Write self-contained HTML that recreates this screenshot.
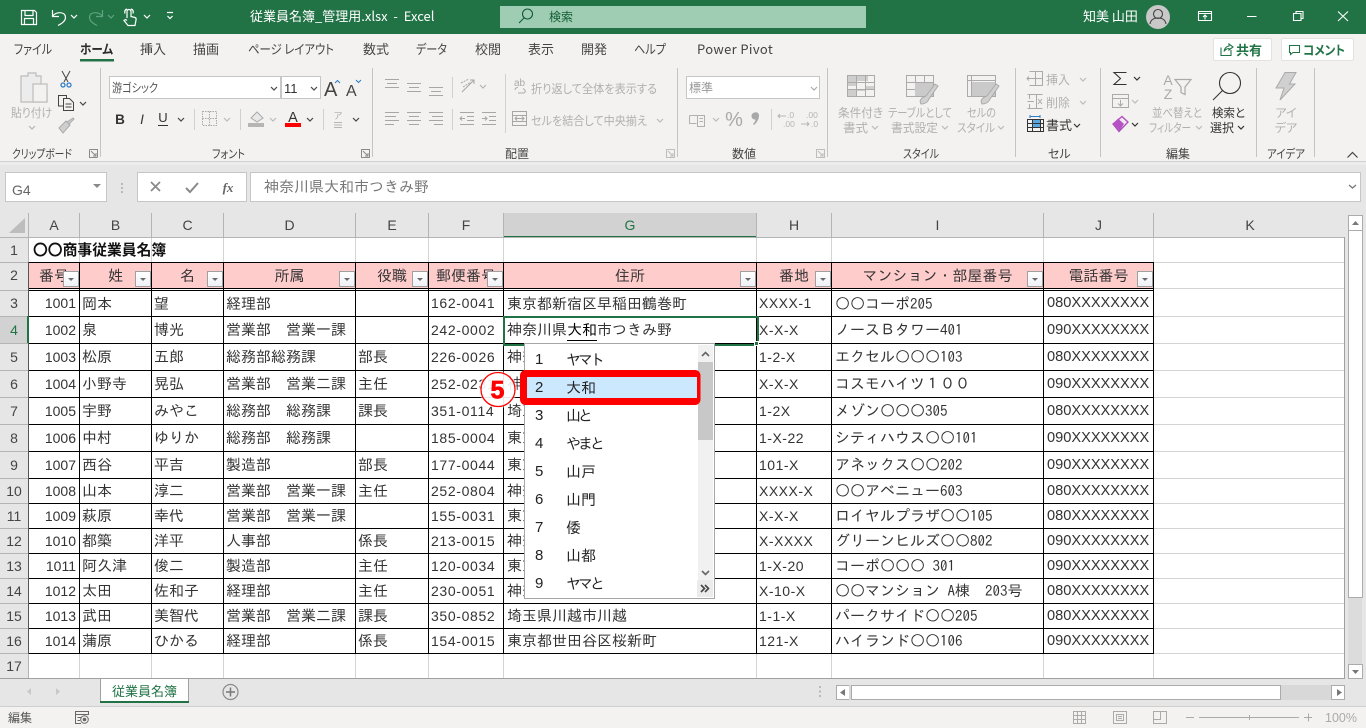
<!DOCTYPE html>
<html lang="ja"><head><meta charset="utf-8"><title>従業員名簿_管理用.xlsx - Excel</title>
<style>
html,body{margin:0;padding:0;width:1366px;height:728px;overflow:hidden;background:#e6e6e6}
body{position:relative;font-family:"IPAGothic","Noto Sans CJK JP",sans-serif;color:#222}
svg{position:absolute;left:0;top:0;display:block}
.u{font-family:"Noto Sans CJK JP","Liberation Sans",sans-serif;font-size:12px;font-feature-settings:"palt";fill:#444}
.t{font-size:13px}
.g{fill:#b0b0b0}.m{text-anchor:middle}.k{fill:#333}
.l{font-family:"Liberation Sans",sans-serif}
.r{position:absolute;left:0;width:1344px;font-size:15px;color:#333}
.r i{position:absolute;top:0;font-style:normal;white-space:nowrap}
.r i:nth-of-type(1){left:29px;width:47px;text-align:right;font-family:"Liberation Sans",sans-serif;font-size:14px}
.r i:nth-of-type(2){left:82px}
.r i:nth-of-type(3){left:154px}
.r i:nth-of-type(4){left:226px}
.r i:nth-of-type(5){left:358px}
.r i:nth-of-type(6){left:431px;font-family:"Liberation Sans",sans-serif;font-size:14px;letter-spacing:.65px}
.r i:nth-of-type(7){left:507px;width:248px;overflow:hidden}
.r i:nth-of-type(8){left:759px;font-family:"Liberation Sans",sans-serif;font-size:14px;letter-spacing:.5px}
.r i:nth-of-type(9){left:835px}
.r i:nth-of-type(10){left:1047px;font-family:"Liberation Sans",sans-serif;font-size:14.6px}
.rn{position:absolute;left:0;width:28px;text-align:center;font-family:"Liberation Sans",sans-serif;font-size:14px;color:#444}
.hd{position:absolute;left:0;top:263px;height:25px;line-height:25px;width:1344px;font-size:15px;color:#333}
.hd b{position:absolute;top:0;font-weight:400;text-align:center;white-space:nowrap}
.fb{position:absolute;top:271px;width:14px;height:14px;border:1px solid #a0a0a0;background:linear-gradient(#fff,#eef1f5)}
.fb:after{content:"";position:absolute;left:4px;top:6px;border:3.500px solid transparent;border-top:3.500px solid #6a6a6a;border-bottom:0}
.ch{position:absolute;top:213px;height:24px;text-align:center;font-family:"Liberation Sans",sans-serif;font-size:14px;line-height:24px;color:#444}
#pop{position:absolute;left:524px;top:343px;width:189px;height:254px;border:1px solid #a6a6a6;background:#fff;font-size:15px;color:#222}
#pop div{position:absolute;left:0;width:170px;height:28px;line-height:28px}
#pop s{position:absolute;left:10px;text-decoration:none;font-family:"Liberation Sans",sans-serif;font-size:15px;line-height:28px}
#pop em{position:absolute;left:41px;font-style:normal;white-space:nowrap}
#pop em.n{letter-spacing:-3px}
</style></head><body>
<svg width="1366" height="728" viewBox="0 0 1366 728">
<defs><path id="c" d="M0 0l3 3 3-3" fill="none" stroke="currentColor" stroke-width="1.2"/></defs>
<!-- title bar -->
<rect width="1366" height="34" fill="#217346"/>
<rect y="34" width="1366" height="127" fill="#f3f2f1"/>
<rect y="161" width="1366" height="1" fill="#d2d2d2"/><rect y="162" width="1366" height="3" fill="#ececec"/>
<g fill="none" stroke="#fff" stroke-width="1.2">
<path d="M21.5 10.5H34.5L36.5 12.5V24.5H21.5ZM25 10.5V15.5H33V10.5M24.5 24.5V18.5H33.5V24.5"/>
<path d="M52.5 10V16.5H59M52.5 16.5C55 11.5 65.5 11 65.5 17.5C65.5 21 61 24 58 25.5"/>
<path stroke="#5ea37f" d="M102.5 10V16.5H96M102.5 16.5C100 11.5 89.5 11 89.5 17.5C89.5 21 94 24 97 25.5"/>
<path d="M127 18V11.5Q127 9.5 129 9.5T131 11.5V16.5L135 17.5Q136.500 18 136 20L135 25.500H128L124 20.500L125.500 19.500L127 20.500M125 13.500Q124 10 127 9M131 9Q134 10 133 13.500"/>
<path d="M167 12.500H173M167.500 16l2.500 2.500 2.500-2.500"/>
</g>
<use href="#c" x="71" y="15" color="#fff"/><use href="#c" x="108" y="15" color="#5ea37f"/><use href="#c" x="144" y="15" color="#fff"/>
<text x="250" y="21" class="u" style="font-size:13px;fill:#fff;font-feature-settings:normal">従業員名簿_管理用.xlsx&#160;&#160;-&#160;&#160;Excel</text>
<rect x="500" y="6" width="366" height="22" fill="#9fcdb3"/>
<circle cx="527.500" cy="14" r="5" fill="none" stroke="#0f5a33" stroke-width="1.100"/><path d="M524 18l-5 5" stroke="#0f5a33" stroke-width="1.100"/>
<text x="549" y="21" class="u" style="fill:#125c35;font-size:12px">検索</text>
<text x="1083" y="21" class="u" style="font-size:13px;fill:#fff;font-feature-settings:normal">知美 山田</text>
<circle cx="1158" cy="17" r="12" fill="#c8c8c8"/><circle cx="1158" cy="14" r="4.500" fill="none" stroke="#444" stroke-width="1.100"/><path d="M1150 24q1-6 8-6t8 6" fill="none" stroke="#444" stroke-width="1.100"/>
<g fill="none" stroke="#fff" stroke-width="1.100"><path d="M1198.500 11.500H1211.500V20.500H1198.500ZM1198.500 13.500H1211.500M1205 19.500V15M1203 17l2-2 2 2"/>
<path d="M1247 16.500H1256.500M1293.500 13.500H1301V20.500H1293.500ZM1296 13.500V11.500H1303V18.500H1301M1338 11.500L1348 21M1348 11.500L1338 21"/></g>
<!-- tabs -->
<text x="14" y="54" class="u t" textLength="38" lengthAdjust="spacingAndGlyphs">ファイル</text>
<text x="80" y="54" class="u t" style="font-weight:700;fill:#2b2b2b" textLength="33" lengthAdjust="spacingAndGlyphs">ホーム</text>
<text x="140" y="54" class="u t">挿入</text>
<text x="193" y="54" class="u t">描画</text>
<text x="248" y="54" class="u t" textLength="86" lengthAdjust="spacingAndGlyphs">ページ レイアウト</text>
<text x="363" y="54" class="u t">数式</text>
<text x="416" y="54" class="u t" textLength="31" lengthAdjust="spacingAndGlyphs">データ</text>
<text x="475" y="54" class="u t">校閲</text>
<text x="528" y="54" class="u t">表示</text>
<text x="581" y="54" class="u t">開発</text>
<text x="634" y="54" class="u t" textLength="32" lengthAdjust="spacingAndGlyphs">ヘルプ</text>
<text x="697" y="54" class="u t" style="letter-spacing:.35px">Power Pivot</text>
<rect x="80" y="59" width="34" height="2.500" fill="#217346"/>
<!-- share / comment -->
<rect x="1213.500" y="38.500" width="58" height="22" rx="1.500" fill="#fff" stroke="#e4e2e0"/><rect x="1281.500" y="38.500" width="72" height="22" rx="1.500" fill="#fff" stroke="#e4e2e0"/>
<path d="M1221 47.500V55.500H1231V50M1224 51.500Q1225 46.500 1229 46V44L1233 47L1229 50V48.500Q1226 48.500 1224 51.500" fill="none" stroke="#217346" stroke-width="1.100"/>
<text x="1236" y="55" class="u t" style="font-weight:700;fill:#217346">共有</text>
<path d="M1289.500 45.500H1299.500V52.500H1293L1290.500 54.500V52.500H1289.500Z" fill="none" stroke="#217346" stroke-width="1.100"/>
<text x="1303" y="55" class="u t" style="font-weight:700;fill:#217346" textLength="42" lengthAdjust="spacingAndGlyphs">コメント</text>
<!-- ribbon separators -->
<path d="M100.500 68V157M372.500 68V157M677.500 68V157M827.500 68V157M1015.500 68V157M1100.500 68V157M1256.500 68V157M1314.500 68V157" stroke="#c4c4c4"/>
<path d="M194.500 109V130M240.500 109V130M323.500 109V130M452.500 77V98M452.500 109V130M505.500 74V133M771.500 109V130" stroke="#d0d0d0"/>
<!-- clipboard -->
<path d="M21 76H28V73H36V76H41V91H47V102H21Z" fill="#ececec" stroke="#bcbcbc" stroke-width="1.200"/><rect x="33" y="84" width="14" height="18" fill="#f3f2f1" stroke="#bcbcbc" stroke-width="1.200"/>
<text x="11" y="117" class="u g" textLength="41" lengthAdjust="spacingAndGlyphs">貼り付け</text><use href="#c" x="29" y="126" color="#b5b5b5"/>
<path d="M62 71L68 82M70 71L64 82" stroke="#444" fill="none"/><circle cx="63" cy="85" r="2" fill="none" stroke="#2e7cc4" stroke-width="1.300"/><circle cx="69" cy="85" r="2" fill="none" stroke="#2e7cc4" stroke-width="1.300"/>
<path d="M63.500 106H58.500V95.500H66.500V98M63.500 98.500H69.500L73.500 102.500V110.500H63.500ZM65.500 104H71.500M65.500 107H71.500" fill="none" stroke="#444"/>
<use href="#c" x="80" y="102" color="#444"/>
<path d="M59 128L66 121L70 125L63 133ZM67 122L73 118L74 119L69 124" fill="#cfcfcf" stroke="#aaa"/>
<text x="12" y="158" class="u" textLength="60" lengthAdjust="spacingAndGlyphs">クリップボード</text><text x="212" y="158" class="u" textLength="33" lengthAdjust="spacingAndGlyphs">フォント</text><text x="505" y="158" class="u">配置</text><text x="732" y="158" class="u">数値</text><text x="903" y="158" class="u" textLength="36" lengthAdjust="spacingAndGlyphs">スタイル</text><text x="1048" y="158" class="u">セル</text><text x="1166" y="158" class="u">編集</text><text x="1267" y="158" class="u" textLength="38" lengthAdjust="spacingAndGlyphs">アイデア</text>
<g fill="none" stroke="#8a8a8a"><path d="M89.500 149.500H97.500V157.500M89.500 149.500V157.500H97.500M91 151l5 5M96 153v3h-3"/><path d="M361.500 149.500H369.500V157.500H361.500ZM363 151l5 5M368 153v3h-3"/></g>
<g fill="none" stroke="#bdbdbd"><path d="M666.500 149.500H674.500V157.500H666.500ZM668 151l5 5M673 153v3h-3"/><path d="M816.500 149.500H824.500V157.500H816.500ZM818 151l5 5M823 153v3h-3"/></g>
<!-- font -->
<rect x="109.500" y="76.500" width="171" height="22" fill="#fff" stroke="#c6c6c6"/><rect x="281.500" y="76.500" width="39" height="22" fill="#fff" stroke="#c6c6c6"/>
<text x="112" y="92" class="u" style="font-size:12px;fill:#555" textLength="46" lengthAdjust="spacingAndGlyphs">游ゴシック</text><text x="284" y="93" class="l" style="font-size:13px;fill:#333">11</text>
<use href="#c" x="271" y="87" color="#444"/><use href="#c" x="311" y="87" color="#444"/>
<text x="324" y="96" class="l" style="font-size:20px;fill:#444">A</text><text x="346" y="96" class="l" style="font-size:16px;fill:#444">A</text>
<path d="M335 83l2.500-2.500 2.500 2.500" fill="none" stroke="#2e7cc4"/><path d="M356 80l2.500 2.500 2.500-2.500" fill="none" stroke="#2e7cc4"/>
<text x="120" y="124" class="l m" style="font-size:13.500px;font-weight:700;fill:#333">B</text>
<text x="142" y="124" class="l m" style="font-size:13.500px;font-style:italic;fill:#333">I</text>
<text x="163" y="122" class="l m" style="font-size:13px;fill:#333">U</text><path d="M158 125.500H168" stroke="#333"/>
<use href="#c" x="178" y="118" color="#444"/>
<path d="M202.500 111.500H216.500V125.500H202.500ZM209.500 111.500V125.500M202.500 118.500H216.500" fill="none" stroke="#aaa" stroke-dasharray="1.500 1"/><use href="#c" x="224" y="118" color="#bbb"/>
<path d="M251 118L257 112L263 118L257 122Z" fill="#e8e8e8" stroke="#aaa"/><rect x="248" y="123" width="16" height="4" fill="#b5b5b5"/><use href="#c" x="270" y="118" color="#bbb"/>
<text x="293" y="122" class="l m" style="font-size:14.500px;fill:#333">A</text><rect x="285" y="123" width="16" height="4" fill="#ff0000"/><use href="#c" x="307" y="118" color="#444"/>
<text x="338" y="119" class="u m" style="font-size:9px;fill:#aaa">ア</text><path d="M334 122.500H342M334 125H342M334 127.500H342" stroke="#b5b5b5"/><use href="#c" x="353" y="118" color="#444"/>
<!-- alignment -->
<g stroke="#a6a6a6" fill="none">
<path d="M385 79.500H399M387 83.500H397M385 87.500H399M407 83.500H421M409 87.500H419M407 91.500H421M429 87.500H443M431 91.500H441M429 95.500H443"/>
<path d="M385 112.500H399M385 116.500H396M385 120.500H399M385 124.500H394M407 112.500H421M409 116.500H419M407 120.500H421M409 124.500H419M429 112.500H443M432 116.500H443M429 120.500H443M434 124.500H443"/>
<path d="M460 112.500H474M467 116.500H474M467 120.500H474M460 124.500H474M465 118.500H460M462 116.500l-2 2 2 2M482 112.500H496M489 116.500H496M489 120.500H496M482 124.500H496M482 118.500H487M485 116.500l2 2-2 2"/>
<path d="M462 92L474 80M470 80H474V84"/><path d="M461 83l8-4M463 87l8-5" stroke-dasharray="2 1"/>
<rect x="512.500" y="111.500" width="14" height="14"/><path d="M512.500 115.500H526.500M512.500 121.500H526.500M515 118.500H524M517 116.500l-2 2 2 2M522 116.500l2 2-2 2"/>
</g><use href="#c" x="480" y="85" color="#b5b5b5"/>
<text x="514" y="86" class="l" style="font-size:10px;fill:#aaa">ab</text><path d="M515 90q0-2.500 3-2.500M518 93h6q3-2-1-4.500" fill="none" stroke="#aaa"/>
<text x="531" y="93" class="u g" textLength="126" lengthAdjust="spacingAndGlyphs">折り返して全体を表示する</text>
<text x="531" y="125" class="u g" textLength="116" lengthAdjust="spacingAndGlyphs">セルを結合して中央揃え</text><use href="#c" x="657" y="119" color="#bbb"/>
<!-- number -->
<rect x="686.500" y="76.500" width="133" height="22" fill="#fff" stroke="#c6c6c6"/><text x="689" y="92" class="u" style="font-size:12px;fill:#999">標準</text><use href="#c" x="811" y="87" color="#aaa"/>
<path d="M689.500 115.500H704.500M689.500 115.500V123.500H696.500M697.500 115.500H704.500V126.500H697.500ZM699.500 118.500H703M699.500 121.500H703" fill="none" stroke="#b0b0b0"/>
<use href="#c" x="713" y="118" color="#bbb"/>
<text x="734" y="126" class="l m" style="font-size:20px;fill:#a8a8a8">%</text>
<path d="M754.500 112.500a3.200 3.200 0 0 1 4.500 3c0 3.500-2 7-5 9.500l-1-1c1.500-1.500 2.500-3 2.500-4.500a3.200 3.200 0 0 1-1-7z" fill="#a8a8a8"/>
<text x="787" y="118" class="l" style="font-size:8.500px;fill:#b5b5b5">.0</text><text x="783" y="127" class="l" style="font-size:8.500px;fill:#b5b5b5">.00</text>
<text x="806" y="118" class="l" style="font-size:8.500px;fill:#b5b5b5">.00</text><text x="811" y="127" class="l" style="font-size:8.500px;fill:#b5b5b5">.0</text>
<path d="M778 116H786M780 114l-2 2 2 2M801 124H809M807 122l2 2-2 2" fill="none" stroke="#b5b5b5"/>
<!-- styles -->
<g stroke="#aaa" fill="none">
<rect x="847.500" y="75.500" width="27" height="21" fill="#f3f2f1"/><path fill="#cacaca" stroke="none" d="M848 76H868V81H857V86H848ZM848 90H874V86H866V91H857V96H848Z" opacity=".9"/><path d="M847.500 82.500H874.500M847.500 89.500H874.500M856.500 75.500V96.500M865.500 75.500V96.500"/>
<rect x="906.500" y="75.500" width="27" height="21"/><path d="M906.500 82.500H933.500M906.500 89.500H933.500M915.500 75.500V96.500M924.500 75.500V96.500"/>
<rect x="915" y="83" width="18" height="13" fill="#cacaca" stroke="none"/>
<rect x="967.500" y="75.500" width="28" height="21"/><rect x="971" y="82" width="24" height="14" fill="#cacaca" stroke="none"/><path d="M967.500 80.500H995.500M971.500 75.500V96.500"/>
<path d="M921 104Q918 99 926 96L935 84L938 86L929 99Q927 104 921 104Z" fill="#d0d0d0"/>
<path d="M982 104Q979 99 987 96L996 84L999 86L990 99Q988 104 982 104Z" fill="#d0d0d0"/>
</g>
<text x="838" y="117" class="u g" textLength="45" lengthAdjust="spacingAndGlyphs">条件付き</text><text x="843" y="132" class="u g" textLength="25" lengthAdjust="spacingAndGlyphs">書式</text><use href="#c" x="872" y="126" color="#bbb"/>
<text x="888" y="117" class="u g" textLength="64" lengthAdjust="spacingAndGlyphs">テーブルとして</text><text x="891" y="132" class="u g" textLength="47" lengthAdjust="spacingAndGlyphs">書式設定</text><use href="#c" x="942" y="126" color="#bbb"/>
<text x="967" y="117" class="u g" textLength="29" lengthAdjust="spacingAndGlyphs">セルの</text><text x="957" y="132" class="u g" textLength="38" lengthAdjust="spacingAndGlyphs">スタイル</text><use href="#c" x="998" y="126" color="#bbb"/>
<!-- cells -->
<g stroke="#aaa" fill="none"><path d="M1029.500 71.500H1042.500V85.500H1029.500M1035.500 71.500V85.500M1029.500 78.500H1042.500M1027 78.500H1033M1029 76.500l-2 2 2 2"/>
<path d="M1027.500 94.500H1042.500M1027.500 108.500H1042.500M1029.500 94.500V99M1029.500 104V108.500M1036.500 94.500V108.500M1027.500 101.500H1034M1038 99l4 5M1042 99l-4 5"/></g>
<text x="1046" y="84" class="u g">挿入</text><text x="1046" y="107" class="u g">削除</text><use href="#c" x="1080" y="78" color="#bbb"/><use href="#c" x="1080" y="101" color="#bbb"/>
<rect x="1032" y="120" width="9" height="7" fill="#5aa7e0"/><path d="M1027.500 119.500H1043.500V131.500H1027.500ZM1032.500 119.500V131.500M1040.500 119.500V131.500M1027.500 123.500H1043.500M1027.500 127.500H1043.500" fill="none" stroke="#333"/><path d="M1030 116.500H1040M1030 115v3M1040 115v3" stroke="#2e7cc4"/>
<text x="1046" y="130" class="u k" style="font-size:13px">書式</text><use href="#c" x="1074" y="124" color="#333"/>
<!-- editing -->
<path d="M1126.500 72.500H1114L1120.500 78.500L1114 84.500H1126.500" fill="none" stroke="#333" stroke-width="1.100"/><use href="#c" x="1134" y="77" color="#333"/>
<path d="M1112.500 94.500H1128.500V107.500H1112.500ZM1112.500 98.500H1128.500M1120.500 100V106M1118 103.500l2.500 2.500 2.500-2.500" fill="none" stroke="#aaa"/><use href="#c" x="1132" y="100" color="#bbb"/>
<path d="M1113 124L1122 116.500L1128 122L1119 131.500Z" fill="#f3e6f5" stroke="#a94cb8" stroke-width="1.300"/><path d="M1113 124L1118 118.500L1124 124L1119 131.500Z" fill="#b553c4"/><use href="#c" x="1132" y="123" color="#333"/>
<text x="1168" y="85" class="l m" style="font-size:14px;fill:#aaa">A</text><text x="1168" y="99" class="l m" style="font-size:14px;fill:#aaa">Z</text>
<path d="M1175 79.500H1191L1185 87V94.500L1181 92.500V87Z" fill="none" stroke="#aaa" stroke-width="1.200"/>
<text x="1152" y="117" class="u g" textLength="50" lengthAdjust="spacingAndGlyphs">並べ替えと</text><text x="1149" y="132" class="u g" textLength="42" lengthAdjust="spacingAndGlyphs">フィルター</text><use href="#c" x="1196" y="126" color="#bbb"/>
<circle cx="1230" cy="83" r="10.500" fill="none" stroke="#333" stroke-width="1.100"/><path d="M1222.500 90.500L1213 100" stroke="#333" stroke-width="1.100"/>
<text x="1212" y="117" class="u k" textLength="33" lengthAdjust="spacingAndGlyphs">検索と</text><text x="1210" y="132" class="u k">選択</text><use href="#c" x="1238" y="126" color="#333"/>
<path d="M1285 72.500H1296L1289.500 84H1295L1280 100L1284 88H1276Z" fill="#d0d0d0" stroke="#aaa"/>
<text x="1286" y="117" class="u g m">アイ</text><text x="1286" y="132" class="u g m">デア</text>
<path d="M1347.500 157.500L1352.500 152.500L1357.500 157.500" fill="none" stroke="#444" stroke-width="1.200"/>
<!-- formula bar -->
<rect x="5.500" y="172.500" width="101" height="29" fill="#fff" stroke="#c6c6c6"/><rect x="137.500" y="172.500" width="109" height="29" fill="#fff" stroke="#c6c6c6"/><rect x="250.500" y="172.500" width="1110" height="29" fill="#fff" stroke="#c6c6c6"/>
<text x="12" y="195" class="l" style="font-size:14px;fill:#666">G4</text><path d="M93 184H101L97 188Z" fill="#8a8a8a"/>
<path d="M122 183v2M122 187v2M122 191v2" stroke="#aaa" stroke-width="1.500"/>
<path d="M151 182L160 191M160 182L151 191" stroke="#8a8a8a" stroke-width="1.800"/><path d="M186 188L190 192L198 183" fill="none" stroke="#8a8a8a" stroke-width="2"/>
<text x="228" y="192" class="m" style="font-family:'Liberation Serif',serif;font-style:italic;font-weight:700;font-size:13px;fill:#666">fx</text>
<text x="264" y="192" style="font-family:IPAGothic,'Noto Sans CJK JP',sans-serif;font-size:15px;fill:#777">神奈川県大和市つきみ野</text>
<path d="M1349 185l3.500 3 3.500-3" fill="none" stroke="#777" stroke-width="1.300"/>
<!-- sheet -->
<rect x="0" y="213" width="1345" height="25" fill="#e6e6e6"/><rect x="0" y="213" width="28" height="466" fill="#e6e6e6"/>
<rect x="29" y="238" width="1315" height="440" fill="#fff"/>
<rect x="29" y="263" width="1124" height="25" fill="#ffcccc"/>
<path d="M25 218V233H9Z" fill="#bdbdbd"/>
<rect x="504" y="213" width="252" height="24" fill="#d2d2d2"/><rect x="504" y="236" width="253" height="2" fill="#217346"/>
<rect x="0" y="317" width="28" height="26" fill="#d2d2d2"/>
<g shape-rendering="crispEdges" fill="none">
<path stroke="#d4d4d4" d="M29 262.500H1344M29 288.500H1344M29 316.500H1344M29 343.500H1344M29 370.500H1344M29 397.500H1344M29 424.500H1344M29 451.500H1344M29 478.500H1344M29 503.500H1344M29 528.500H1344M29 553.500H1344M29 578.500H1344M29 603.500H1344M29 628.500H1344M29 653.500H1344M79.500 238V678M151.500 238V678M223.500 238V678M355.500 238V678M428.500 238V678M503.500 238V678M756.500 238V678M831.500 238V678M1043.500 238V678M1153.500 238V678"/>
<path stroke="#b4b4b4" d="M0 237.500H1345M28.500 213V678M79.500 213V237M151.500 213V237M223.500 213V237M355.500 213V237M428.500 213V237M503.500 213V237M756.500 213V237M831.500 213V237M1043.500 213V237M1153.500 213V237M0 262.500H28M0 290.500H28M0 316.500H28M0 343.500H28M0 370.500H28M0 397.500H28M0 424.500H28M0 451.500H28M0 478.500H28M0 503.500H28M0 528.500H28M0 553.500H28M0 578.500H28M0 603.500H28M0 628.500H28M0 653.500H28"/>
<path stroke="#a0a0a0" d="M1344.500 237V679"/>
<path stroke="#555" d="M28.500 262V654"/>
<path stroke="#000" d="M29 262.500H1154M29 288.500H1154M29 290.500H1154M29 316.500H1154M29 343.500H1154M29 370.500H1154M29 397.500H1154M29 424.500H1154M29 451.500H1154M29 478.500H1154M29 503.500H1154M29 528.500H1154M29 553.500H1154M29 578.500H1154M29 603.500H1154M29 628.500H1154M29 653.500H1154M79.500 262V654M151.500 262V654M223.500 262V654M355.500 262V654M428.500 262V654M503.500 262V654M756.500 262V654M831.500 262V654M1043.500 262V654M1153.500 262V654"/>
</g>
<rect x="27" y="316" width="2" height="27" fill="#217346"/>
<!-- tabs / status -->
<rect x="0" y="678" width="1345" height="1" fill="#a0a0a0"/>
<rect x="0" y="679" width="1366" height="27" fill="#e6e6e6"/>
<rect x="0" y="707" width="1366" height="21" fill="#f3f2f1"/><rect x="0" y="706" width="1366" height="1" fill="#cfcfcf"/>
<path d="M100.500 702V678.500H188.500V702" fill="#fff" stroke="#a0a0a0"/><rect x="100" y="701" width="89" height="2" fill="#217346"/>
<text x="112" y="696" class="u" style="font-size:13px;fill:#217346;font-feature-settings:normal">従業員名簿</text>
<path d="M31 688V695L27 691.500ZM56 688V695L60 691.500Z" fill="#c8c8c8"/>
<circle cx="230.500" cy="692" r="7.500" fill="none" stroke="#8a8a8a" stroke-width="1.200"/><path d="M226 692H235M230.500 687.500V696.500" stroke="#777" stroke-width="1.500"/>
<path d="M820 686v2M820 690.500v2M820 695v2" stroke="#aaa" stroke-width="1.500"/>
<rect x="836.500" y="685.500" width="13" height="14" fill="#fff" stroke="#ababab"/><path d="M845 689V696L840 692.500Z" fill="#777"/>
<rect x="849" y="685" width="482" height="15" fill="#d8d8d8"/>
<rect x="851.500" y="685.500" width="429" height="14" fill="#fff" stroke="#ababab"/>
<rect x="1331.500" y="685.500" width="13" height="14" fill="#fff" stroke="#ababab"/><path d="M1337 689V696L1342 692.500Z" fill="#777"/>
<rect x="1348" y="230" width="14" height="434" fill="#dcdcdc"/>
<rect x="1348.500" y="215.500" width="14" height="15" fill="#fff" stroke="#ababab"/><path d="M1352 225H1359L1355.500 221Z" fill="#777"/>
<rect x="1348.500" y="230.500" width="14" height="367" fill="#fff" stroke="#ababab"/>
<rect x="1348.500" y="664.500" width="14" height="14" fill="#fff" stroke="#ababab"/><path d="M1352 670H1359L1355.500 674Z" fill="#777"/>
<text x="8" y="722" class="u" style="font-size:12px;fill:#555;font-feature-settings:normal">編集</text>
<path d="M75.500 711.500H88.500V714.500H75.500ZM75.500 714.500V723.500H81M77.500 717.500H81M77.500 720.500H80" fill="none" stroke="#666"/><circle cx="84.500" cy="719.500" r="3.800" fill="none" stroke="#666"/><circle cx="84.500" cy="719.500" r="1.800" fill="#666"/>
<g fill="none" stroke="#aaa"><path d="M1073.500 711.500H1085.500V723.500H1073.500ZM1077.500 711.500V723.500M1081.500 711.500V723.500M1073.500 715.500H1085.500M1073.500 719.500H1085.500"/>
<path d="M1113.500 711.500H1126.500V723.500H1113.500ZM1116.500 714.500H1123.500V720.500H1116.500ZM1118 716.500H1122M1118 718.500H1122"/>
<path d="M1153.500 711.500H1166.500V723.500H1153.500ZM1153.500 719.500H1160.500V711.500"/>
<path d="M1186 717.500H1194M1199 717.500H1299M1249.500 715V720M1304 717.500H1312M1308.500 713.500V721.500"/></g>
<text x="1325" y="722" class="l" style="font-size:12.500px;fill:#aaa">100%</text>
</svg>

<div class="ch" style="left:29px;width:50px">A</div><div class="ch" style="left:80px;width:71px">B</div><div class="ch" style="left:152px;width:71px">C</div><div class="ch" style="left:224px;width:131px">D</div><div class="ch" style="left:356px;width:72px">E</div><div class="ch" style="left:429px;width:74px">F</div><div class="ch" style="left:504px;width:252px;color:#217346">G</div><div class="ch" style="left:757px;width:74px">H</div><div class="ch" style="left:832px;width:211px">I</div><div class="ch" style="left:1044px;width:109px">J</div><div class="ch" style="left:1154px;width:192px">K</div>

<div class="r" style="top:238px;height:24px;line-height:24px"><span class="rn">1</span><span style="position:absolute;left:33px;font:700 14.8px 'Noto Sans CJK JP',sans-serif;line-height:24px;color:#111">〇〇商事従業員名簿</span></div>
<div class="hd"><span class="rn">2</span>
<b style="left:29px;width:50px">番号</b><b style="left:80px;width:71px">姓</b><b style="left:152px;width:71px">名</b><b style="left:224px;width:131px">所属</b><b style="left:356px;width:72px">役職</b><b style="left:429px;width:74px">郵便番号</b><b style="left:504px;width:252px">住所</b><b style="left:757px;width:74px">番地</b><b style="left:832px;width:211px">マンション・部屋番号</b><b style="left:1044px;width:109px">電話番号</b>
</div>
<div class="fb" style="left:63px"></div><div class="fb" style="left:135px"></div><div class="fb" style="left:207px"></div><div class="fb" style="left:339px"></div><div class="fb" style="left:412px"></div><div class="fb" style="left:487px"></div><div class="fb" style="left:740px"></div><div class="fb" style="left:815px"></div><div class="fb" style="left:1027px"></div><div class="fb" style="left:1137px"></div>

<div class="r" style="top:290px;height:27px;line-height:27px"><span class="rn">3</span><i>1001</i><i>岡本</i><i>望</i><i>経理部</i><i></i><i>162-0041</i><i>東京都新宿区早稲田鶴巻町</i><i>XXXX-1</i><i>○○コーポ205</i><i>080XXXXXXXX</i></div>
<div class="r" style="top:317px;height:26px;line-height:26px"><span class="rn" style="color:#217346">4</span><i>1002</i><i>泉</i><i>博光</i><i>営業部　営業一課</i><i></i><i>242-0002</i><i>神奈川県<span style="border-bottom:1px solid #000;color:#000;line-height:14px;display:inline-block;height:17px">大和</span>市つきみ野</i><i>X-X-X</i><i>ノースＢタワー401</i><i>090XXXXXXXX</i></div>
<div class="r" style="top:344px;height:26px;line-height:26px"><span class="rn">5</span><i>1003</i><i>松原</i><i>五郎</i><i>総務部総務課</i><i>部長</i><i>226-0026</i><i>神奈川県</i><i>1-2-X</i><i>エクセル○○○103</i><i>080XXXXXXXX</i></div>
<div class="r" style="top:371px;height:26px;line-height:26px"><span class="rn">6</span><i>1004</i><i>小野寺</i><i>晃弘</i><i>営業部　営業二課</i><i>主任</i><i>252-0231</i><i>神奈川県</i><i>X-X-X</i><i>コスモハイツ１００</i><i>090XXXXXXXX</i></div>
<div class="r" style="top:398px;height:26px;line-height:26px"><span class="rn">7</span><i>1005</i><i>宇野</i><i>みやこ</i><i>総務部　総務課</i><i>課長</i><i>351-0114</i><i>埼玉県</i><i>1-2X</i><i>メゾン○○○305</i><i>080XXXXXXXX</i></div>
<div class="r" style="top:425px;height:26px;line-height:26px"><span class="rn">8</span><i>1006</i><i>中村</i><i>ゆりか</i><i>総務部　総務課</i><i></i><i>185-0004</i><i>東京都</i><i>1-X-22</i><i>シティハウス○○101</i><i>090XXXXXXXX</i></div>
<div class="r" style="top:452px;height:26px;line-height:26px"><span class="rn">9</span><i>1007</i><i>西谷</i><i>平吉</i><i>製造部</i><i>部長</i><i>177-0044</i><i>東京都</i><i>101-X</i><i>アネックス○○202</i><i>090XXXXXXXX</i></div>
<div class="r" style="top:479px;height:24px;line-height:24px"><span class="rn">10</span><i>1008</i><i>山本</i><i>淳二</i><i>営業部　営業一課</i><i>主任</i><i>252-0804</i><i>神奈川県</i><i>XXXX-X</i><i>○○アベニュー603</i><i>080XXXXXXXX</i></div>
<div class="r" style="top:504px;height:24px;line-height:24px"><span class="rn">11</span><i>1009</i><i>萩原</i><i>幸代</i><i>営業部　営業一課</i><i></i><i>155-0031</i><i>東京都</i><i>X-X-X</i><i>ロイヤルプラザ○○105</i><i>080XXXXXXXX</i></div>
<div class="r" style="top:529px;height:24px;line-height:24px"><span class="rn">12</span><i>1010</i><i>都築</i><i>洋平</i><i>人事部</i><i>係長</i><i>213-0015</i><i>神奈川県</i><i>X-XXXX</i><i>グリーンヒルズ○○802</i><i>090XXXXXXXX</i></div>
<div class="r" style="top:554px;height:24px;line-height:24px"><span class="rn">13</span><i>1011</i><i>阿久津</i><i>俊二</i><i>製造部</i><i>主任</i><i>120-0034</i><i>東京都</i><i>1-X-20</i><i>コーポ○○○ 301</i><i>090XXXXXXXX</i></div>
<div class="r" style="top:579px;height:24px;line-height:24px"><span class="rn">14</span><i>1012</i><i>太田</i><i>佐和子</i><i>経理部</i><i>主任</i><i>230-0051</i><i>神奈川県</i><i>X-10-X</i><i>○○マンション A棟　203号</i><i>080XXXXXXXX</i></div>
<div class="r" style="top:604px;height:24px;line-height:24px"><span class="rn">15</span><i>1013</i><i>武田</i><i>美智代</i><i>営業部　営業二課</i><i>課長</i><i>350-0852</i><i>埼玉県川越市川越</i><i>1-1-X</i><i>パークサイド○○205</i><i>080XXXXXXXX</i></div>
<div class="r" style="top:629px;height:24px;line-height:24px"><span class="rn">16</span><i>1014</i><i>蒲原</i><i>ひかる</i><i>経理部</i><i>係長</i><i>154-0015</i><i>東京都世田谷区桜新町</i><i>121-X</i><i>ハイランド○○106</i><i>090XXXXXXXX</i></div>
<div class="r" style="top:654px;height:24px;line-height:24px"><span class="rn">17</span></div>

<!-- active cell -->
<div style="position:absolute;left:503px;top:316px;width:252px;height:26px;border:2px solid #217346"></div>
<div style="position:absolute;left:754px;top:341px;width:5px;height:5px;background:#217346;border:1px solid #fff;box-sizing:border-box"></div>

<!-- popup -->
<div id="pop">
<div style="top:2px"><s>1</s><em class="n">ヤマト</em></div>
<div style="top:30px"><s>2</s><em>大和</em></div>
<div style="top:58px"><s>3</s><em class="n">山と</em></div>
<div style="top:86px"><s>4</s><em class="n">やまと</em></div>
<div style="top:114px"><s>5</s><em>山戸</em></div>
<div style="top:142px"><s>6</s><em>山門</em></div>
<div style="top:170px"><s>7</s><em>倭</em></div>
<div style="top:198px"><s>8</s><em>山都</em></div>
<div style="top:226px"><s>9</s><em class="n">ヤマと</em></div>
</div>
<svg width="1366" height="728" viewBox="0 0 1366 728" style="pointer-events:none">
<rect x="698" y="345" width="15" height="252" fill="#f1f1f1"/><rect x="698" y="362" width="15" height="78" fill="#c8c8c8"/>
<path d="M702 356l3.500-3.500 3.500 3.500M702 571l3.500 3.500 3.500-3.500" fill="none" stroke="#666" stroke-width="1.600"/>
<rect x="697" y="580" width="16" height="17" fill="#ebebeb"/>
<path d="M701 585l3.500 3.500-3.500 3.500M705 585l3.500 3.500-3.500 3.500" fill="none" stroke="#444" stroke-width="1.600"/>
<rect x="523.500" y="373.500" width="173.500" height="28" rx="2" fill="#cce8ff" fill-opacity="0" stroke="#ff0000" stroke-width="7"/>
<circle cx="498" cy="389.500" r="19" fill="#fff" opacity=".45"/>
<circle cx="498" cy="389.500" r="17" fill="#fff" fill-opacity=".82" stroke="#ff0000" stroke-width="1.300"/>
<text x="497.500" y="398.500" text-anchor="middle" style="font-family:'Liberation Sans',sans-serif;font-weight:700;font-size:25px;fill:#ff0000;stroke:#ff0000;stroke-width:.7px">5</text>
</svg>
<div style="position:absolute;left:527px;top:377px;width:170px;height:21px;background:#cce8ff;font-size:15px;line-height:21px;color:#222"><span style="position:absolute;left:8px;font-family:'Liberation Sans',sans-serif">2</span><span style="position:absolute;left:39px">大和</span></div>
</body></html>
